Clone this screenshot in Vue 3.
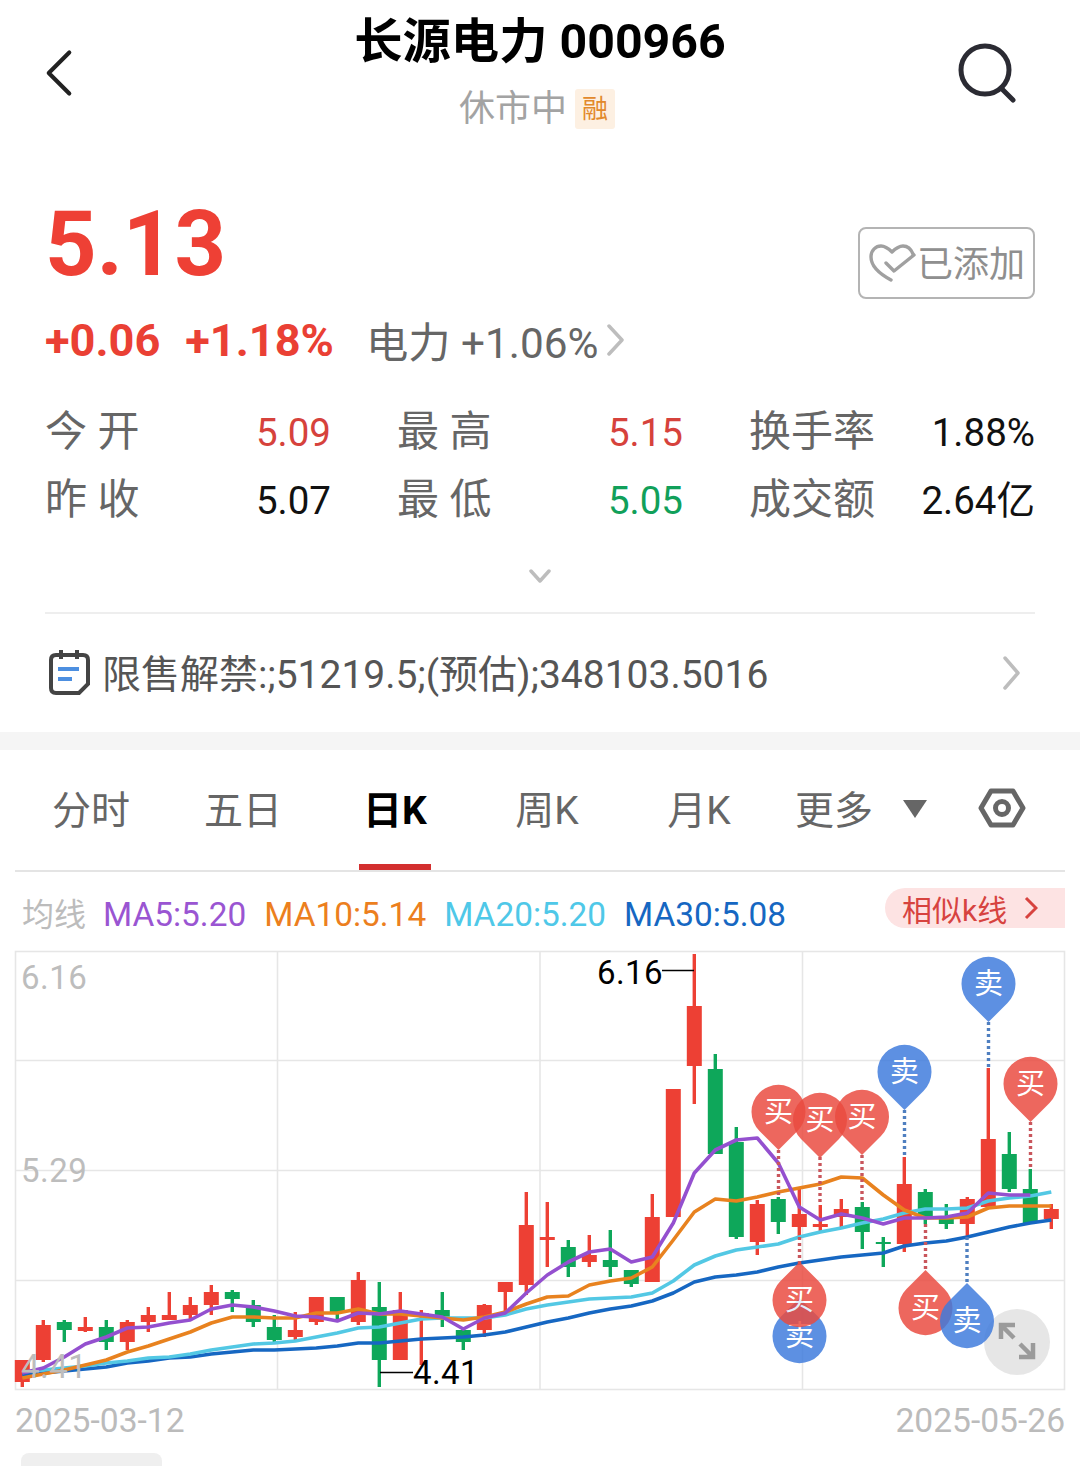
<template>
  <div class="page">
    <header class="head">
      <svg class="back" viewBox="0 0 30 50"><path d="M26 3 L4 25 L26 47" /></svg>
      <div class="head-mid">
        <div class="name">长源电力 000966</div>
        <div class="state">休市中<span class="rong">融</span></div>
      </div>
      <svg class="search" viewBox="0 0 60 60">
        <circle cx="28" cy="27" r="24" />
        <path d="M44 45 L56 57" />
      </svg>
    </header>

    <section class="quote">
      <div class="price-row">
        <div class="price">5.13</div>
        <div class="added">
          <svg class="heart" viewBox="0 0 48 40">
            <path d="M23 37 C10 30 3 23 3 14 C3 7 8 3 13 3 C18 3 21 6 24 9 C27 6 30 3 35 3 C40 3 43 6 45 11" />
            <path d="M18 20 L26 28 L46 12" />
          </svg>
          <span>已添加</span>
        </div>
      </div>
      <div class="change-row">
        <span class="chg">+0.06</span>
        <span class="chg pct">+1.18%</span>
        <span class="sector">电力 +1.06%</span>
        <svg class="sector-arrow" viewBox="0 0 20 32"><path d="M3 2 L16 16 L3 30" /></svg>
      </div>

      <div class="stats">
        <div v-for="s in stats" :key="s.label" class="stat">
          <span class="stat-label">{{ s.label }}</span>
          <span class="stat-val" :class="s.cls">{{ s.val }}</span>
        </div>
      </div>

      <div class="more-wrap">
        <svg class="more-arrow" viewBox="0 0 24 14"><path d="M3 2 L12 12 L21 2" /></svg>
      </div>
    </section>

    <div class="notice">
      <svg class="cal" viewBox="0 0 42 46">
        <path d="M8 5 H35 Q40 5 40 10 V34 L31 43 H8 Q3 43 3 38 V10 Q3 5 8 5 Z" class="cal-box" />
        <path d="M13 0 V9 M29 0 V9" class="cal-box" />
        <path d="M10 19 H31 M10 29 H24" class="cal-line" />
      </svg>
      <span class="notice-text">限售解禁:;51219.5;(预估);348103.5016</span>
      <svg class="notice-arrow" viewBox="0 0 20 34"><path d="M3 2 L16 17 L3 32" /></svg>
    </div>

    <div class="band"></div>

    <nav class="tabs">
      <div v-for="t in tabs" :key="t" class="tab" :class="{ on: t === '日K' }">{{ t }}</div>
      <div class="tab tab-more">更多<i class="tri"></i></div>
      <svg class="hex" viewBox="0 0 48 40">
        <path d="M13 3 H35 L45 20 L35 37 H13 L3 20 Z" />
        <circle cx="24" cy="20" r="6.5" />
      </svg>
    </nav>

    <div class="ma-row">
      <span class="ma-title">均线</span>
      <span v-for="m in maLabels" :key="m.text" class="ma-item" :style="{ color: m.color }">{{ m.text }}</span>
      <div class="similar">相似k线<svg viewBox="0 0 14 24"><path d="M2 2 L12 12 L2 22" /></svg></div>
    </div>

    <svg class="chart" viewBox="15 951 1050 439">
      <g class="grid">
        <rect x="15.5" y="951.5" width="1049" height="438" />
        <path d="M15 1060.5 H1065 M15 1170.5 H1065 M15 1280.5 H1065 M277.5 951 V1389 M540 951 V1389 M802.5 951 V1389" />
      </g>

      <g v-for="c in candles" :key="c.x">
        <line :x1="c.x" :x2="c.x" :y1="c.top" :y2="c.bot" :stroke="c.color" stroke-width="3.4" />
        <rect :x="c.x - 7.5" :y="c.open" width="15" :height="c.close - c.open" :fill="c.color" />
      </g>

      <polyline v-for="l in lines" :key="l.color" :points="l.points" :stroke="l.color" class="ma-line" />

      <text x="21" y="989" class="axis">6.16</text>
      <text x="21" y="1182" class="axis">5.29</text>
      <text x="21" y="1378" class="axis">4.41</text>

      <path d="M662 970.5 H694" class="mark-line" />
      <text x="597" y="984" class="mark">6.16</text>
      <path d="M380 1372.5 H413" class="mark-line" />
      <text x="413" y="1384" class="mark">4.41</text>

      <circle cx="1017" cy="1342" r="33" fill="#dcdcdc" fill-opacity="0.7" />
      <path d="M1015 1325 H1001 V1339 M1001 1325 L1014 1338 M1033 1343 V1357 H1019 M1033 1357 L1020 1344" class="expand" />

      <line v-for="d in dots" :key="d.x + '-' + d.y1" :x1="d.x" :x2="d.x" :y1="d.y1" :y2="d.y2" :stroke="d.color" class="dots" />

      <g v-for="p in pins" :key="p.text + p.x + p.y" class="pin">
        <path :d="pinPath(p)" :fill="p.text === '买' ? '#ea4b40' : '#3f7bdd'" />
        <text :x="p.x" :y="p.y + 10" class="pin-text">{{ p.text }}</text>
      </g>
    </svg>

    <div class="dates">
      <span>2025-03-12</span>
      <span>2025-05-26</span>
    </div>
    <div class="stub"></div>
  </div>
</template>

<script setup>
const RED = '#ed4034'
const GREEN = '#0ea75a'

const stats = [
  { label: '今 开', val: '5.09', cls: 'up' },
  { label: '最 高', val: '5.15', cls: 'up' },
  { label: '换手率', val: '1.88%', cls: '' },
  { label: '昨 收', val: '5.07', cls: '' },
  { label: '最 低', val: '5.05', cls: 'down' },
  { label: '成交额', val: '2.64亿', cls: '' },
]

const tabs = ['分时', '五日', '日K', '周K', '月K']

const maLabels = [
  { text: 'MA5:5.20', color: '#9a55d2' },
  { text: 'MA10:5.14', color: '#ec7f1e' },
  { text: 'MA20:5.20', color: '#4fc8e8' },
  { text: 'MA30:5.08', color: '#1667c2' },
]

// r/g, wick top, body top, body bottom, wick bottom
const raw = [
  ['r', 1360, 1360, 1382, 1387], ['r', 1320, 1325, 1360, 1362], ['g', 1320, 1322, 1330, 1342],
  ['r', 1317, 1327, 1331, 1332], ['g', 1320, 1327, 1342, 1350], ['r', 1320, 1322, 1342, 1350],
  ['r', 1307, 1315, 1322, 1332], ['r', 1292, 1315, 1320, 1320], ['r', 1297, 1305, 1315, 1320],
  ['r', 1285, 1292, 1305, 1315], ['g', 1290, 1292, 1299, 1312], ['g', 1300, 1305, 1322, 1327],
  ['g', 1315, 1327, 1340, 1342], ['r', 1312, 1330, 1337, 1340], ['r', 1297, 1297, 1322, 1325],
  ['g', 1297, 1297, 1312, 1322], ['r', 1272, 1280, 1322, 1325], ['g', 1282, 1307, 1360, 1387],
  ['r', 1292, 1310, 1360, 1360], ['r', 1310, 1313, 1316, 1365], ['g', 1292, 1310, 1318, 1327],
  ['g', 1328, 1330, 1342, 1350], ['r', 1304, 1305, 1330, 1337], ['r', 1282, 1282, 1292, 1312],
  ['r', 1192, 1225, 1285, 1295], ['r', 1202, 1237, 1240, 1267], ['g', 1240, 1247, 1267, 1277],
  ['r', 1235, 1255, 1262, 1267], ['g', 1230, 1260, 1267, 1277], ['g', 1270, 1270, 1284, 1287],
  ['r', 1194, 1217, 1282, 1282], ['r', 1089, 1089, 1217, 1217], ['r', 954, 1006, 1066, 1104],
  ['g', 1054, 1069, 1154, 1154], ['g', 1127, 1142, 1237, 1239], ['r', 1200, 1204, 1242, 1255],
  ['g', 1197, 1199, 1222, 1234], ['r', 1187, 1214, 1227, 1237], ['r', 1205, 1224, 1227, 1232],
  ['r', 1199, 1209, 1217, 1227], ['g', 1202, 1207, 1232, 1249], ['g', 1237, 1242, 1244, 1267],
  ['r', 1157, 1184, 1244, 1252], ['g', 1189, 1192, 1217, 1224], ['g', 1204, 1217, 1224, 1229],
  ['r', 1197, 1199, 1224, 1237], ['r', 1068, 1139, 1207, 1209], ['g', 1132, 1154, 1189, 1192],
  ['g', 1169, 1189, 1223, 1223], ['r', 1204, 1209, 1219, 1229],
]

const xAt = (i) => 22.3 + i * 21

const candles = raw.map((c, i) => ({
  x: xAt(i),
  color: c[0] === 'r' ? RED : GREEN,
  top: c[1],
  open: c[2],
  close: c[3],
  bot: c[4],
}))

const ma5 = [1373, 1368, 1357, 1344, 1337, 1328, 1327, 1323, 1320, 1309, 1305, 1307, 1311, 1316, 1317, 1321, 1313, 1314, 1311, 1314, 1317, 1329, 1318, 1313, 1293, 1275, 1262, 1252, 1249, 1262, 1257, 1223, 1173, 1150, 1140, 1138, 1163, 1207, 1220, 1214, 1218, 1224, 1218, 1218, 1217, 1213, 1193, 1195, 1195]
const ma10 = [1378, 1374, 1370, 1365, 1360, 1352, 1346, 1339, 1332, 1323, 1317, 1317, 1318, 1318, 1313, 1313, 1309, 1314, 1314, 1316, 1318, 1320, 1317, 1312, 1304, 1297, 1296, 1285, 1281, 1278, 1267, 1240, 1212, 1199, 1201, 1197, 1192, 1188, 1184, 1177, 1178, 1195, 1210, 1218, 1218, 1217, 1208, 1206, 1206, 1206]
const ma20 = [1372, 1370, 1368, 1366, 1363, 1361, 1358, 1357, 1354, 1350, 1347, 1344, 1343, 1341, 1337, 1333, 1328, 1327, 1323, 1319, 1318, 1318, 1318, 1315, 1309, 1305, 1302, 1299, 1298, 1297, 1293, 1281, 1265, 1256, 1250, 1247, 1244, 1237, 1232, 1228, 1223, 1219, 1213, 1209, 1209, 1208, 1201, 1198, 1196, 1192]
const ma30 = [1375, 1373, 1371, 1369, 1367, 1363, 1361, 1358, 1357, 1354, 1352, 1350, 1350, 1349, 1348, 1346, 1343, 1343, 1341, 1339, 1338, 1337, 1335, 1332, 1327, 1322, 1318, 1313, 1309, 1306, 1301, 1293, 1282, 1277, 1275, 1272, 1267, 1263, 1260, 1257, 1255, 1253, 1246, 1243, 1241, 1237, 1232, 1227, 1223, 1220]

const toPoints = (arr) => arr.map((y, i) => `${xAt(i)},${y}`).join(' ')

const lines = [
  { color: '#1667c2', points: toPoints(ma30) },
  { color: '#53c8e4', points: toPoints(ma20) },
  { color: '#e8821f', points: toPoints(ma10) },
  { color: '#9450cf', points: toPoints(ma5) },
]

const pins = [
  { text: '买', x: 778.5, y: 1112, up: true },
  { text: '买', x: 820, y: 1120, up: true },
  { text: '买', x: 862, y: 1117, up: true },
  { text: '卖', x: 904.5, y: 1072, up: true },
  { text: '卖', x: 988.5, y: 984, up: true },
  { text: '买', x: 1030.5, y: 1084, up: true },
  { text: '卖', x: 799.5, y: 1336, up: false },
  { text: '买', x: 799.5, y: 1300, up: false },
  { text: '买', x: 925.5, y: 1308, up: false },
  { text: '卖', x: 967, y: 1321, up: false },
]

const dots = [
  { x: 778.5, y1: 1150, y2: 1197, color: '#c9565c' },
  { x: 820, y1: 1157, y2: 1205, color: '#c9565c' },
  { x: 862, y1: 1155, y2: 1202, color: '#c9565c' },
  { x: 904.5, y1: 1110, y2: 1157, color: '#4f7fc0' },
  { x: 988.5, y1: 1022, y2: 1068, color: '#4f7fc0' },
  { x: 1030.5, y1: 1122, y2: 1169, color: '#c9565c' },
  { x: 799.5, y1: 1237, y2: 1264, color: '#c9565c' },
  { x: 925.5, y1: 1224, y2: 1270, color: '#c9565c' },
  { x: 967, y1: 1237, y2: 1283, color: '#4f7fc0' },
]

// teardrop: round head of radius 27, tip 38 away from the centre
function pinPath(p) {
  const r = 27
  const s = p.up ? 1 : -1
  const tip = p.y + 38 * s
  const dx = 19
  const dy = 19 * s
  const sweep = p.up ? 1 : 0
  return `M${p.x} ${tip} L${p.x - dx} ${p.y + dy} A${r} ${r} 0 1 ${sweep} ${p.x + dx} ${p.y + dy} Z`
}
</script>

<style>
html, body {
  margin: 0;
  background: #fff;
}
</style>

<style scoped>
.page {
  width: 1080px;
  height: 1466px;
  overflow: hidden;
  background: #fff;
  font-family: Roboto, "Noto Sans CJK SC", sans-serif;
  color: #666;
}
svg {
  display: block;
  flex: none;
}

/* header */
.head {
  display: grid;
  grid-template-columns: 1fr auto 1fr;
  align-items: start;
  padding: 17px 63px 0 45px;
  height: 150px;
  box-sizing: border-box;
}
.back {
  width: 28px;
  height: 50px;
  margin-top: 31px;
}
.back path {
  fill: none;
  stroke: #222;
  stroke-width: 4.4;
  stroke-linecap: round;
  stroke-linejoin: round;
}
.head-mid {
  display: flex;
  flex-direction: column;
  align-items: center;
  transform: translateX(9px);
}
.name {
  font-size: 48.3px;
  line-height: 50px;
  font-weight: 700;
  color: #000;
}
.state {
  display: flex;
  align-items: center;
  margin-top: 20px;
  margin-right: 6px;
  font-size: 36px;
  line-height: 44px;
  color: #a3a3a3;
}
.rong {
  margin-left: 8px;
  width: 40px;
  height: 40px;
  line-height: 40px;
  text-align: center;
  font-size: 26px;
  color: #e2892c;
  background: #fdf0e2;
  border-radius: 3px;
}
.search {
  width: 60px;
  height: 60px;
  margin-top: 26px;
  justify-self: end;
}
.search circle, .search path {
  fill: none;
  stroke: #2b2b33;
  stroke-width: 5;
  stroke-linecap: round;
}

/* quote */
.quote {
  padding: 0 45px;
}
.price-row {
  display: flex;
  justify-content: space-between;
  align-items: flex-end;
  height: 150px;
}
.price {
  margin-bottom: 10px;
  font-size: 90px;
  line-height: 90px;
  font-weight: 700;
  color: #ee4035;
}
.added {
  display: flex;
  align-items: center;
  justify-content: center;
  width: 177px;
  height: 72px;
  margin-bottom: 1px;
  box-sizing: border-box;
  border: 2.5px solid #b4b4b4;
  border-radius: 8px;
  font-size: 36px;
  line-height: 60px;
  color: #8f8f8f;
  gap: 1px;
}
.added span {
  margin-top: 4px;
}
.heart {
  width: 48px;
  height: 40px;
}
.heart path {
  fill: none;
  stroke: #a0a0a0;
  stroke-width: 3.4;
  stroke-linecap: round;
  stroke-linejoin: round;
}
.change-row {
  display: flex;
  align-items: center;
  height: 50px;
  margin-top: 15px;
}
.chg {
  font-size: 45.1px;
  font-weight: 700;
  color: #ea4034;
}
.pct {
  margin-left: 25px;
}
.sector {
  margin-left: 32px;
  margin-bottom: 2px;
  font-size: 42.3px;
  color: #666;
}
.sector-arrow {
  width: 20px;
  height: 32px;
  margin-left: 8px;
}
.sector-arrow path, .notice-arrow path, .more-arrow path {
  fill: none;
  stroke: #bdbdbd;
  stroke-width: 3.5;
  stroke-linecap: round;
  stroke-linejoin: round;
}
.stats {
  display: grid;
  grid-template-columns: repeat(3, 285px);
  column-gap: 67px;
  margin-top: 34px;
  width: 990px;
}
.stat {
  display: flex;
  justify-content: space-between;
  align-items: center;
  height: 68px;
}
.stat-label {
  margin-bottom: 2px;
  font-size: 42px;
  line-height: 50px;
  color: #666;
}
.stat-val {
  margin-right: -1px;
  font-size: 38.5px;
  line-height: 46px;
  color: #111;
}
.up {
  color: #d6423c;
}
.down {
  color: #11a05a;
}
.more-wrap {
  display: flex;
  justify-content: center;
  padding: 34px 0 29px;
  border-bottom: 2px solid #eeeeee;
}
.more-arrow {
  width: 24px;
  height: 14px;
}

/* notice row */
.notice {
  display: flex;
  align-items: center;
  height: 118px;
  padding: 0 58px 0 48px;
}
.cal {
  width: 42px;
  height: 46px;
}
.cal-box {
  stroke: #444;
  stroke-width: 4;
  fill: none;
}
.cal-line {
  stroke: #4d8fe0;
  stroke-width: 4;
  fill: none;
}
.notice-text {
  flex: 1;
  margin-left: 12px;
  margin-bottom: 4px;
  font-size: 39px;
  color: #555;
}
.notice-arrow {
  width: 20px;
  height: 34px;
}
.band {
  height: 18px;
  background: #f5f5f5;
}

/* tabs */
.tabs {
  display: grid;
  grid-template-columns: repeat(6, 152px) 1fr;
  align-items: center;
  margin: 0 15px;
  height: 122px;
  box-sizing: border-box;
  border-bottom: 2px solid #e4e4e4;
}
.tab {
  position: relative;
  height: 120px;
  line-height: 123px;
  text-align: center;
  font-size: 39px;
  color: #666;
}
.tab.on {
  color: #000;
  font-weight: 700;
}
.tab.on::after {
  content: "";
  position: absolute;
  left: 40px;
  bottom: 0;
  width: 72px;
  height: 6px;
  background: #d32f2f;
}
.tab-more {
  text-align: left;
  padding-left: 20px;
}
.tri {
  position: absolute;
  left: 128px;
  top: 50px;
  border-left: 12px solid transparent;
  border-right: 12px solid transparent;
  border-top: 18px solid #666;
}
.hex {
  width: 48px;
  height: 40px;
  margin: 0 0 4px 51px;
}
.hex path, .hex circle {
  fill: none;
  stroke: #666;
  stroke-width: 5;
  stroke-linejoin: round;
}

/* moving averages */
.ma-row {
  display: flex;
  align-items: center;
  margin: 0 15px;
  padding-left: 7px;
  height: 79px;
  position: relative;
}
.ma-title {
  font-size: 32px;
  color: #bcbcbc;
  margin-right: 17px;
}
.ma-item {
  padding-top: 5px;
  font-size: 33.4px;
  margin-right: 18px;
}
.similar {
  position: absolute;
  right: 0;
  top: 16px;
  display: flex;
  align-items: center;
  width: 180px;
  height: 40px;
  box-sizing: border-box;
  padding-left: 17px;
  background: #fde3e3;
  border-radius: 20px 0 0 20px;
  font-size: 30px;
  color: #d7433f;
}
.similar svg {
  width: 14px;
  height: 24px;
  margin-left: 17px;
}
.similar path {
  fill: none;
  stroke: #d7433f;
  stroke-width: 3;
}

/* chart */
.chart {
  width: 1050px;
  height: 439px;
  margin-left: 15px;
  overflow: visible;
}
.grid rect, .grid path {
  fill: none;
  stroke: #e6e6e6;
  stroke-width: 1.6;
}
.ma-line {
  fill: none;
  stroke-width: 3.6;
  stroke-linejoin: round;
}
.axis {
  font-size: 33px;
  fill: #bdbdbd;
  letter-spacing: 0.5px;
}
.mark {
  font-size: 33px;
  fill: #000;
  letter-spacing: 0.4px;
}
.mark-line {
  fill: none;
  stroke: #000;
  stroke-width: 1.5;
}
.dots {
  stroke-width: 3.4;
  stroke-dasharray: 3 3;
}
.pin {
  opacity: 0.84;
}
.pin-text {
  font-size: 29px;
  fill: #fff;
  text-anchor: middle;
}
.expand {
  fill: none;
  stroke: #9b9b9b;
  stroke-width: 4.5;
}
.dates {
  display: flex;
  justify-content: space-between;
  padding: 11px 15px 0;
  font-size: 33.6px;
  line-height: 40px;
  color: #bbbbbb;
}
.stub {
  width: 141px;
  height: 40px;
  margin: 12px 0 0 21px;
  background: #efefef;
  border-radius: 8px;
}
</style>
